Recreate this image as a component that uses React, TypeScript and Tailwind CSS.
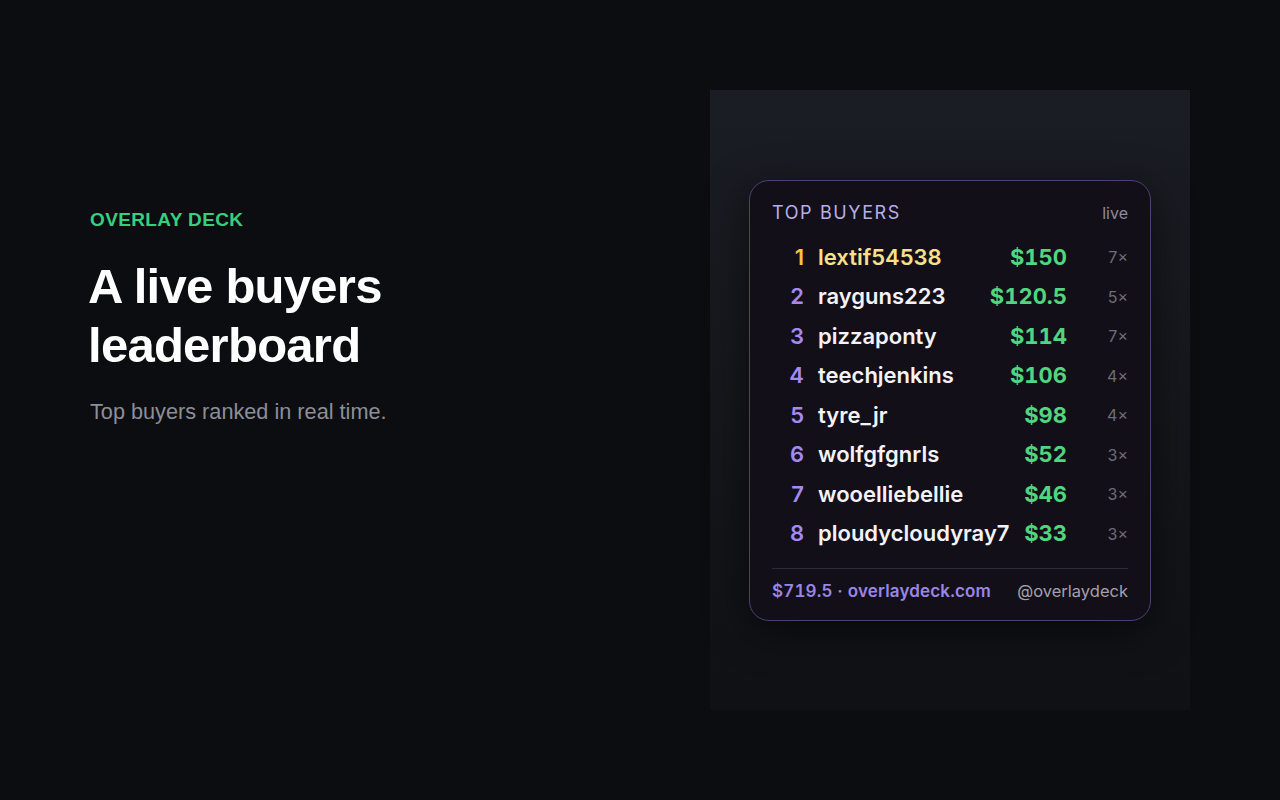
const BUYERS = [
  { name: 'lextif54538', amount: '$150', count: '7×' },
  { name: 'rayguns223', amount: '$120.5', count: '5×' },
  { name: 'pizzaponty', amount: '$114', count: '7×' },
  { name: 'teechjenkins', amount: '$106', count: '4×' },
  { name: 'tyre_jr', amount: '$98', count: '4×' },
  { name: 'wolfgfgnrls', amount: '$52', count: '3×' },
  { name: 'wooelliebellie', amount: '$46', count: '3×' },
  { name: 'ploudycloudyray7', amount: '$33', count: '3×' },
];

function Leaderboard() {
  return (
    <div className="w-[402px] rounded-[20px] border border-[#4b4272] bg-[#130f19] px-[22px] pt-[20px] pb-[17px] shadow-[0_10px_40px_rgba(0,0,0,0.55)] font-['Inter',sans-serif]">
      <div className="flex items-center justify-between leading-[24px]">
        <span className="text-[18px] tracking-[0.09em] text-[#b8aee6]">TOP BUYERS</span>
        <span className="text-[16px] text-[#8d8a99]">live</span>
      </div>
      <div className="mt-[13px] flex flex-col">
        {BUYERS.map((b, i) => {
          const first = i === 0;
          return (
            <div key={b.name} className="flex h-[39.5px] items-center">
              <span
                className={`w-[32px] text-right text-[22px] font-semibold ${first ? 'text-[#f5c542]' : 'text-[#a48af0]'}`}
              >
                {i + 1}
              </span>
              <span
                className={`ml-[14px] flex-1 text-[22px] font-semibold ${first ? 'text-[#f7e08a]' : 'text-[#f4f2f8]'}`}
              >
                {b.name}
              </span>
              <span className="text-[22px] font-bold tabular-nums text-[#4fd67e]">{b.amount}</span>
              <span className="w-[61px] text-right text-[16px] text-[#6f6c7a]">{b.count}</span>
            </div>
          );
        })}
      </div>
      <div className="mt-[14px] h-px bg-[#2e2a3a]" />
      <div className="mt-[10px] flex items-center justify-between leading-[24px]">
        <span className="text-[17px] font-semibold tracking-[0.01em] tabular-nums text-[#9a86e6]">$719.5 · overlaydeck.com</span>
        <span className="text-[16.5px] text-[#a3a0ad]">@overlaydeck</span>
      </div>
    </div>
  );
}

export default function App() {
  return (
    <div className="flex h-[800px] w-[1280px] items-start justify-between bg-[#0c0d10] px-[90px] pt-[90px] font-['Liberation_Sans',Arial,sans-serif]">
      <div className="mt-[118px] flex flex-col">
        <div className="text-[19px] font-bold leading-[24px] tracking-[0.02em] text-[#35d07f]">OVERLAY DECK</div>
        <h1 className="mt-[25px] -ml-[2px] text-[49px] font-bold leading-[59px] tracking-[-0.015em] text-white">
          A live buyers
          <br />
          leaderboard
        </h1>
        <p className="mt-[23px] text-[21.7px] leading-[28px] text-[#8c8e98]">Top buyers ranked in real time.</p>
      </div>
      <div className="flex h-[620px] w-[480px] items-center justify-center bg-[linear-gradient(180deg,#1a1d24_0%,#15171c_50%,#101115_100%)]">
        <Leaderboard />
      </div>
    </div>
  );
}
